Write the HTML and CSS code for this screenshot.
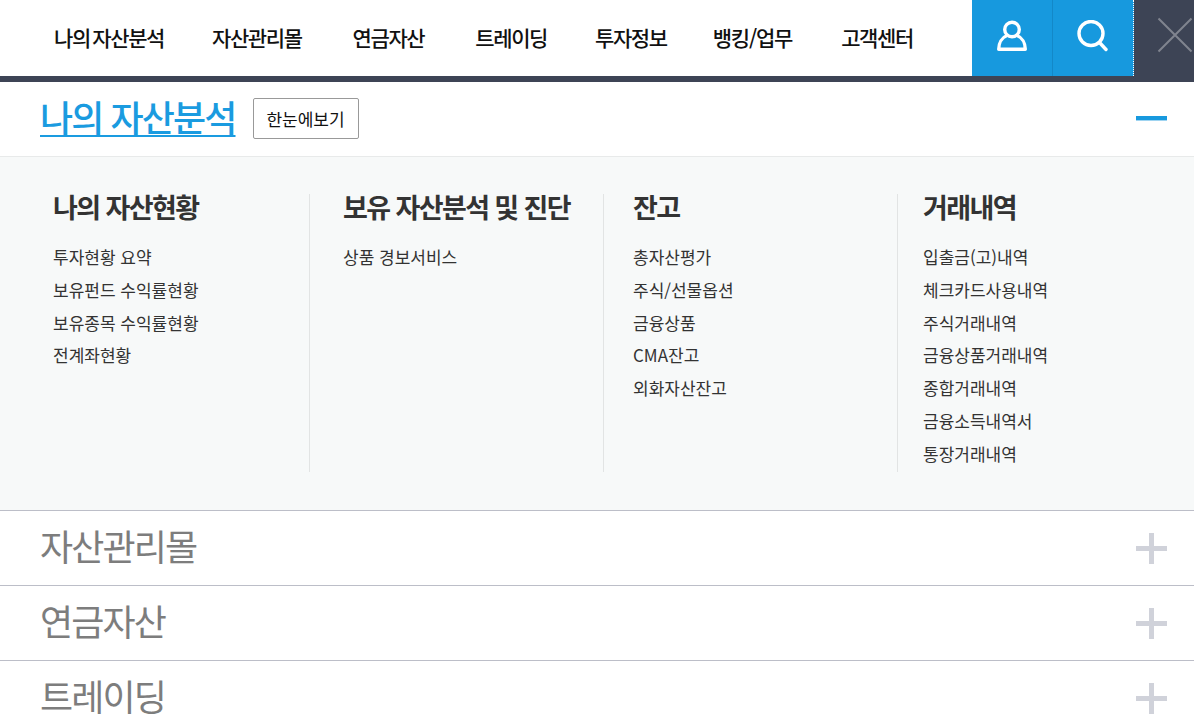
FILE: index.html
```html
<!DOCTYPE html>
<html lang="ko">
<head>
<meta charset="utf-8">
<title>전체메뉴</title>
<link rel="stylesheet" href="styles.css">
</head>
<body>
<header class="topbar">
  <nav class="gnb">
    <a class="gnb-item" href="#">나의 자산분석</a>
    <a class="gnb-item" href="#">자산관리몰</a>
    <a class="gnb-item" href="#">연금자산</a>
    <a class="gnb-item" href="#">트레이딩</a>
    <a class="gnb-item" href="#">투자정보</a>
    <a class="gnb-item" href="#">뱅킹/업무</a>
    <a class="gnb-item" href="#">고객센터</a>
  </nav>
  <div class="tools">
    <a class="tool tool-user" href="#" aria-label="로그인">
      <svg width="32" height="32" viewBox="0 0 32 32"><circle cx="16" cy="9.500" r="7.300" fill="none" stroke="#fff" stroke-width="3.400"/><path d="M11 15.500C6 17.500 2.700 23 2.700 29.300h26.600C29.300 23 26 17.500 21 15.500" fill="none" stroke="#fff" stroke-width="3.400" stroke-linejoin="round"/></svg>
    </a>
    <a class="tool tool-search" href="#" aria-label="검색">
      <svg width="32" height="32" viewBox="0 0 32 32"><circle cx="15" cy="13.500" r="12" fill="none" stroke="#fff" stroke-width="3.400"/><path d="M23.500 22.500l6.500 7" fill="none" stroke="#fff" stroke-width="3.400" stroke-linecap="round"/></svg>
    </a>
  </div>
  <a class="close" href="#" aria-label="닫기">
    <svg width="36" height="36" viewBox="0 0 36 36"><path d="M1.500 1.500l33 33M34.500 1.500l-33 33" fill="none" stroke="#80848f" stroke-width="2"/></svg>
  </a>
</header>
<main>
  <section class="sec-open">
    <div class="sec-head">
      <a class="sec-title" href="#">나의 자산분석</a>
      <a class="btn" href="#">한눈에보기</a>
      <span class="minus"></span>
    </div>
    <div class="panel">
      <div class="col col-1">
        <h3>나의 자산현황</h3>
        <ul>
          <li>투자현황 요약</li>
          <li>보유펀드 수익률현황</li>
          <li>보유종목 수익률현황</li>
          <li>전계좌현황</li>
        </ul>
      </div>
      <div class="col col-2">
        <h3>보유 자산분석 및 진단</h3>
        <ul>
          <li>상품 경보서비스</li>
        </ul>
      </div>
      <div class="col col-3">
        <h3>잔고</h3>
        <ul>
          <li>총자산평가</li>
          <li>주식/선물옵션</li>
          <li>금융상품</li>
          <li>CMA잔고</li>
          <li>외화자산잔고</li>
        </ul>
      </div>
      <div class="col col-4">
        <h3>거래내역</h3>
        <ul>
          <li>입출금(고)내역</li>
          <li>체크카드사용내역</li>
          <li>주식거래내역</li>
          <li>금융상품거래내역</li>
          <li>종합거래내역</li>
          <li>금융소득내역서</li>
          <li>통장거래내역</li>
        </ul>
      </div>
    </div>
  </section>
  <section class="row"><span class="row-title">자산관리몰</span><span class="plus"></span></section>
  <section class="row"><span class="row-title">연금자산</span><span class="plus"></span></section>
  <section class="row"><span class="row-title">트레이딩</span><span class="plus"></span></section>
</main>
</body>
</html>
```
FILE: styles.css
```css
* { box-sizing: border-box; }
html, body { margin: 0; padding: 0; height: 721px; overflow: hidden; background: #fff; }
body { font-family: "Noto Sans CJK KR", "Noto Sans", sans-serif; color: #333; }
a { color: inherit; text-decoration: none; }
ul { list-style: none; margin: 0; padding: 0; }
h3 { margin: 0; }

.topbar { display: flex; height: 82px; border-bottom: 6px solid #3d4455; }
.gnb { flex: 1; display: flex; align-items: center; padding: 0 0 2px 54px; gap: 48px; }
.gnb-item { font-size: 21px; font-weight: 500; letter-spacing: -1.4px; color: #111; white-space: nowrap; word-spacing: -2px; line-height: 74px; }
.gnb-item:nth-child(3), .gnb-item:nth-child(4) { margin-left: 3px; }
.gnb-item:nth-child(6) { margin-left: -2px; letter-spacing: -1.2px; }
.gnb-item:nth-child(7) { margin-left: 1px; }
.tools { display: flex; width: 162px; background: #1799de; border-right: 1px dotted #fff; }
.tool { flex: 1; display: flex; align-items: center; justify-content: center; padding-bottom: 4px; }
.tool svg { display: block; }
.tool-user { border-right: 1px solid #1388c8; }
.tool-search { padding-right: 1px; }
.close { width: 60px; height: 82px; margin-bottom: -6px; background: #3d4455; display: flex; justify-content: flex-end; padding: 17px 1px 0 0; }

.sec-head { height: 75px; display: flex; align-items: center; padding: 0 27px 2px 40px; border-bottom: 1px solid #e8eaea; }
.sec-title { font-size: 36px; font-weight: 500; letter-spacing: -1.9px; color: #1a9be0; text-decoration: underline; text-decoration-thickness: 2px; text-underline-offset: 3px; line-height: 1; margin-top: -5px; }
.btn { margin-left: 17px; width: 106px; height: 41px; border: 1px solid #999; border-radius: 2px; display: flex; align-items: center; justify-content: center; font-size: 17px; color: #111; background: #fff; }
.minus { margin-left: auto; width: 31px; height: 4px; background: #1799de; box-shadow: 0 1px 0 #9fd4f1; }

.panel { display: flex; height: 353px; padding: 37px 0 38px 15px; background: #f7f9f9; }
.col { width: 294px; height: 278px; border-left: 1px solid #e2e4e4; }
.col-1 { border-left: 0; padding-left: 38px; }
.col-2 { padding-left: 33px; }
.col-3 { padding-left: 29px; }
.col-4 { padding-left: 25px; }
.col h3 { font-size: 27px; font-weight: 700; letter-spacing: -1.6px; line-height: 26px; color: #333; white-space: nowrap; }
.col ul { margin-top: 21px; }
.col li { font-size: 17px; line-height: 32.8px; color: #333; white-space: nowrap; }

.row { height: 75px; border-top: 1px solid #bcbec8; display: flex; align-items: center; padding: 0 27px 0 40px; }
.row-title { font-size: 36px; letter-spacing: -1.9px; color: #7d7d7d; line-height: 1; margin-top: -7px; }
.plus { margin-left: auto; width: 31px; height: 31px; background: linear-gradient(#d0d2da, #d0d2da) center / 5px 31px no-repeat, linear-gradient(#d0d2da, #d0d2da) center / 31px 5px no-repeat; }
```
